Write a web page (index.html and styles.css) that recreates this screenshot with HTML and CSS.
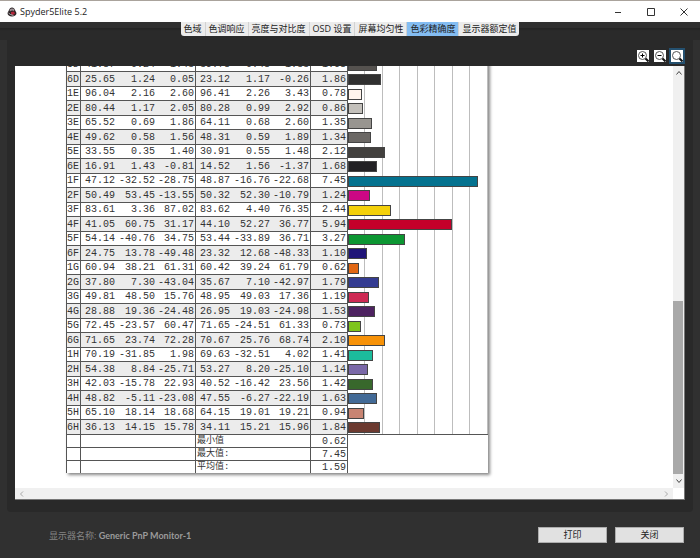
FILE: index.html
```html
<!DOCTYPE html>
<html lang="zh-CN">
<head>
    <meta charset="UTF-8">
    <meta name="viewport" content="width=device-width, initial-scale=1.0">
    <title>Spyder5Elite 5.2</title>
    <link rel="stylesheet" href="styles.css">
</head>
<body>
    <header class="titlebar">
        <svg class="app-icon" viewBox="0 0 20 20" aria-hidden="true">
            <path d="M10 1c3 0 5 2 6 5l3 6c0 4-4 7-9 7s-9-3-9-7l3-6c1-3 3-5 6-5z" fill="#2c2426"/>
            <path d="M5 6c2-3 7-4 10-1l-1 3c-3-2-6-1-8 1z" fill="#9c9296"/>
            <path d="M8 10l6-1 2 4-4 3-4-2z" fill="#b3263a"/>
            <path d="M3 12l4 3 6 2" stroke="#ddd" stroke-width="1.5" fill="none"/>
        </svg>
        <h1>Spyder5Elite 5.2</h1>
        <div class="window-buttons">
            <button type="button" aria-label="最小化"><svg viewBox="0 0 8 8"><path d="M1 4.5h6"/></svg></button>
            <button type="button" aria-label="最大化"><svg viewBox="0 0 8 8"><path d="M.5.5h7v7h-7z"/></svg></button>
            <button type="button" aria-label="关闭窗口"><svg viewBox="0 0 8 8"><path d="M.5.5l7 7M7.5.5l-7 7"/></svg></button>
        </div>
    </header>

    <nav class="tab-strip">
        <div class="tabs">
            <button type="button">色域</button>
            <button type="button">色调响应</button>
            <button type="button">亮度与对比度</button>
            <button type="button">OSD 设置</button>
            <button type="button">屏幕均匀性</button>
            <button type="button" class="active">色彩精确度</button>
            <button type="button">显示器额定值</button>
        </div>
    </nav>

    <main class="panel">
        <div class="zoom-tools">
            <button type="button" aria-label="放大"><svg viewBox="0 0 12 12"><circle cx="5.500" cy="5.500" r="4"/><path d="M3.500 5.500h4M5.500 3.500v4" class="sign"/><path d="M8.500 8.500l3 3" class="handle"/></svg></button>
            <button type="button" aria-label="缩小"><svg viewBox="0 0 12 12"><circle cx="5.500" cy="5.500" r="4"/><path d="M3.500 5.500h4" class="sign"/><path d="M8.500 8.500l3 3" class="handle"/></svg></button>
            <button type="button" class="active" aria-label="适合窗口"><svg viewBox="0 0 12 12"><circle cx="5.500" cy="5.500" r="4"/><path d="M8.500 8.500l3 3" class="handle"/></svg></button>
        </div>

        <div class="viewer">
            <div class="canvas">
                <table class="report">
                    <colgroup>
                        <col class="col-id">
                        <col class="col-l"><col class="col-a"><col class="col-b">
                        <col class="col-l"><col class="col-a"><col class="col-b">
                        <col class="col-delta">
                        <col class="col-chart">
                    </colgroup>
                    <tbody id="rows"></tbody>
                    <tfoot>
                        <tr><td></td><td colspan="3"></td><td colspan="3" class="label">最小值</td><td>0.62</td><td></td></tr>
                        <tr><td></td><td colspan="3"></td><td colspan="3" class="label">最大值:</td><td>7.45</td><td></td></tr>
                        <tr><td></td><td colspan="3"></td><td colspan="3" class="label">平均值:</td><td>1.59</td><td></td></tr>
                    </tfoot>
                </table>
            </div>
            <div class="scroll-y">
                <svg viewBox="0 0 8 8"><path d="M1.500 5.500L4 2.500l2.500 3"/></svg>
                <div class="track"><div class="thumb"></div></div>
                <svg viewBox="0 0 8 8"><path d="M1.500 2.500L4 5.500l2.500-3"/></svg>
            </div>
            <div class="scroll-x">
                <svg viewBox="0 0 8 8"><path d="M5 1.500L2.500 4 5 6.500"/></svg>
                <svg viewBox="0 0 8 8"><path d="M3 1.500L5.500 4 3 6.500"/></svg>
            </div>
            <div class="corner"></div>
        </div>
    </main>

    <footer class="bottom-bar">
        <p>显示器名称: <strong>Generic PnP Monitor-1</strong></p>
        <button type="button">打印</button>
        <button type="button">关闭</button>
    </footer>

    <script>
        // id, L, a, b (reference), L, a, b (measured), delta E, bar colour
        const samples = [
            ['5D', '41.87', '0.24', '1.43', '39.78', '0.48', '1.33', '1.68', '#55524f'],
            ['6D', '25.65', '1.24', '0.05', '23.12', '1.17', '-0.26', '1.86', '#303030'],
            ['1E', '96.04', '2.16', '2.60', '96.41', '2.26', '3.43', '0.78', '#fff4ec'],
            ['2E', '80.44', '1.17', '2.05', '80.28', '0.99', '2.92', '0.86', '#c3c0bb'],
            ['3E', '65.52', '0.69', '1.86', '64.11', '0.68', '2.60', '1.35', '#989590'],
            ['4E', '49.62', '0.58', '1.56', '48.31', '0.59', '1.89', '1.34', '#6b6865'],
            ['5E', '33.55', '0.35', '1.40', '30.91', '0.55', '1.48', '2.12', '#42403e'],
            ['6E', '16.91', '1.43', '-0.81', '14.52', '1.56', '-1.37', '1.68', '#222124'],
            ['1F', '47.12', '-32.52', '-28.75', '48.87', '-16.76', '-22.68', '7.45', '#04728f'],
            ['2F', '50.49', '53.45', '-13.55', '50.32', '52.30', '-10.79', '1.24', '#cc0884'],
            ['3F', '83.61', '3.36', '87.02', '83.62', '4.40', '76.35', '2.44', '#f3d00a'],
            ['4F', '41.05', '60.75', '31.17', '44.10', '52.27', '36.77', '5.94', '#c4002a'],
            ['5F', '54.14', '-40.76', '34.75', '53.44', '-33.89', '36.71', '3.27', '#0c9632'],
            ['6F', '24.75', '13.78', '-49.48', '23.32', '12.68', '-48.33', '1.10', '#1f1478'],
            ['1G', '60.94', '38.21', '61.31', '60.42', '39.24', '61.79', '0.62', '#e16714'],
            ['2G', '37.80', '7.30', '-43.04', '35.67', '7.10', '-42.97', '1.79', '#343c92'],
            ['3G', '49.81', '48.50', '15.76', '48.95', '49.03', '17.36', '1.19', '#ce2a54'],
            ['4G', '28.88', '19.36', '-24.48', '26.95', '19.03', '-24.98', '1.53', '#4d2260'],
            ['5G', '72.45', '-23.57', '60.47', '71.65', '-24.51', '61.33', '0.73', '#7ec41c'],
            ['6G', '71.65', '23.74', '72.28', '70.67', '25.76', '68.74', '2.10', '#f79208'],
            ['1H', '70.19', '-31.85', '1.98', '69.63', '-32.51', '4.02', '1.41', '#1cbc9c'],
            ['2H', '54.38', '8.84', '-25.71', '53.27', '8.20', '-25.10', '1.14', '#7a68a8'],
            ['3H', '42.03', '-15.78', '22.93', '40.52', '-16.42', '23.56', '1.42', '#38682c'],
            ['4H', '48.82', '-5.11', '-23.08', '47.55', '-6.27', '-22.19', '1.63', '#426a96'],
            ['5H', '65.10', '18.14', '18.68', '64.15', '19.01', '19.21', '0.94', '#c88472'],
            ['6H', '36.13', '14.15', '15.78', '34.11', '15.21', '15.96', '1.84', '#6c3a30']
        ];
        const chartMax = 8;

        document.getElementById('rows').innerHTML = samples.map(function(row) {
            const cells = row.slice(1, 8).map(value => `<td>${value}</td>`).join('');
            const width = row[7] / chartMax * 100;
            return `<tr><th scope="row">${row[0]}</th>${cells}<td class="chart"><div class="bar" style="width:${width}%;background:${row[8]}"></div></td></tr>`;
        }).join('');
    </script>
</body>
</html>
```

FILE: styles.css
```css
* {
    box-sizing: border-box;
}
body {
    margin: 0;
    min-height: 100vh;
    display: flex;
    flex-direction: column;
    background: #303030;
    font-family: "Open Sans", "Noto Sans CJK SC", sans-serif;
    font-size: 9px;
    color: #222;
}
button {
    font: inherit;
    color: inherit;
    border: none;
    padding: 0;
    background: none;
}
svg {
    display: block;
    fill: none;
}
.titlebar {
    display: flex;
    align-items: center;
    height: 22px;
    padding-left: 7px;
    background: #fff;
    border-top: 1px solid #aaa39c;
}
.app-icon {
    width: 10px;
    height: 10px;
}
.titlebar h1 {
    flex: 1;
    margin: 0 0 0 3px;
    font-size: 9px;
    font-weight: 400;
}
.window-buttons {
    display: flex;
}
.window-buttons button {
    display: grid;
    place-items: center;
    width: 33px;
    height: 20px;
}
.window-buttons svg {
    width: 8px;
    height: 8px;
    stroke: #333;
    stroke-width: 1;
}
.tab-strip {
    display: flex;
    justify-content: center;
    height: 18px;
    background: linear-gradient(#303030 6px, #242424 6px, #2a2a2a 9px);
}
.tabs {
    display: flex;
    height: 14px;
    background: #ececec;
    border-radius: 0 0 3px 3px;
    overflow: hidden;
}
.tabs button {
    padding: 0 3px;
    line-height: 12px;
    border-right: 1px solid #d2d2d2;
    white-space: nowrap;
}
.tabs button:last-child {
    border-right: none;
}
.tabs .active {
    background: #84bdf2;
}
.panel {
    flex: 1;
    display: flex;
    flex-direction: column;
    margin: 0 7px;
    padding: 8px 8px 12px;
    background: #292929;
    border-radius: 0 0 4px 4px;
}
.zoom-tools {
    display: flex;
    justify-content: flex-end;
    gap: 1px;
    padding-bottom: 2px;
}
.zoom-tools button {
    padding: 2px;
}
.zoom-tools .active {
    background: #24506f;
}
.zoom-tools svg {
    width: 12px;
    height: 12px;
    background: #fff;
    stroke: #555;
}
.zoom-tools .sign {
    stroke: #000;
}
.zoom-tools .handle {
    stroke: #111;
    stroke-width: 2;
}
.viewer {
    flex: 1;
    display: grid;
    grid-template-columns: 1fr 11px;
    grid-template-rows: 1fr 11px;
    background: #fff;
    border-right: 1px solid #777;
    border-bottom: 1px solid #777;
}
.canvas {
    display: flex;
    flex-direction: column;
    justify-content: flex-end;
    height: 422px;
    padding: 0 0 15px 51px;
    overflow: hidden;
}
.report {
    width: 422px;
    table-layout: fixed;
    border-spacing: 0;
    border-left: 1px solid #555;
    background: #fff;
    box-shadow: 2px 2px 3px #888;
    font-family: "Liberation Mono", "Noto Sans CJK SC", monospace;
    font-size: 10px;
    line-height: 12px;
    color: #333;
}
.col-id {
    width: 14px;
}
.col-l {
    width: 35px;
}
.col-a {
    width: 40px;
}
.col-b {
    width: 40px;
}
.col-delta {
    width: 37px;
}
.report th,
.report td {
    height: 14px;
    padding: 1px 1px 0 0;
    border-bottom: 1px solid #555;
    font-weight: 400;
    text-align: right;
}
.report tbody tr:nth-child(even) td,
.report tbody tr:nth-child(even) th {
    height: 15px;
}
.report tbody tr:nth-child(even) {
    background: #ececec;
}
.report th,
.report td:nth-child(4),
.report td:nth-child(7),
.report td:nth-child(8) {
    border-right: 1px solid #555;
}
.report td.chart {
    padding: 0;
    border-bottom: none;
    background: #fff repeating-linear-gradient(to right, transparent 0 calc(12.5% - 1px), #bdbdbd calc(12.5% - 1px) 12.5%);
}
.report tr:last-child td.chart {
    border-bottom: 1px solid #555;
}
.bar {
    height: 11px;
    border: 1px solid #444;
}
.report tfoot tr td {
    height: 13px;
    border-right: 1px solid #555;
    line-height: 11px;
}
.report tfoot tr td:last-child {
    border-right: none;
    border-bottom: none;
}
.report tfoot tr:last-child td {
    height: 12px;
    border-bottom: none;
}
.report tfoot .label {
    padding-left: 1px;
    font-size: 9px;
    text-align: left;
}
.scroll-y {
    display: flex;
    flex-direction: column;
    align-items: center;
    justify-content: space-between;
    padding: 3px 0;
    background: #f0f0f0;
}
.scroll-y svg,
.scroll-x svg {
    width: 8px;
    height: 8px;
    stroke: #444;
}
.track {
    flex: 1;
    display: flex;
    align-items: flex-end;
    align-self: stretch;
    padding: 4px 1px 3px 0;
}
.thumb {
    flex: 1;
    height: 44%;
    background: #a9a9a9;
}
.scroll-x {
    display: flex;
    align-items: center;
    justify-content: space-between;
    padding: 0 3px;
    background: #f0f0f0;
}
.scroll-x svg {
    stroke: #aaa;
}
.corner {
    background: #fff;
}
.bottom-bar {
    display: flex;
    align-items: center;
    gap: 8px;
    height: 46px;
    padding: 0 16px 0 49px;
}
.bottom-bar p {
    flex: 1;
    margin: 0;
    color: #858585;
}
.bottom-bar strong {
    font-family: Lato, sans-serif;
    font-weight: 700;
    color: #9a9a9a;
}
.bottom-bar button {
    width: 69px;
    height: 16px;
    background: #e1e1e1;
    border: 1px solid #adadad;
    line-height: 14px;
}
```
